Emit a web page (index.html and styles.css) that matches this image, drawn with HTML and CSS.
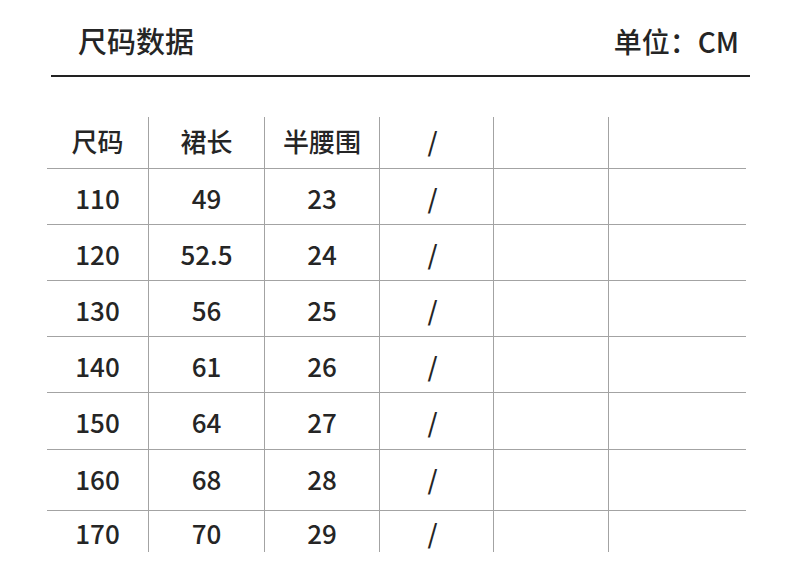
FILE: index.html
```html
<!DOCTYPE html>
<html lang="zh">
<head>
<meta charset="utf-8">
<title>尺码数据</title>
<link rel="stylesheet" href="styles.css">
</head>
<body>
<div class="page">
  <header class="head">
    <div class="title">尺码数据</div>
    <div class="unit">单位：CM</div>
  </header>
  <div class="table">
    <div class="cell th">尺码</div><div class="cell th">裙长</div><div class="cell th">半腰围</div><div class="cell th slash">/</div><div class="cell th"></div><div class="cell th last"></div>
    <div class="cell">110</div><div class="cell">49</div><div class="cell">23</div><div class="cell slash">/</div><div class="cell"></div><div class="cell last"></div>
    <div class="cell">120</div><div class="cell">52.5</div><div class="cell">24</div><div class="cell slash">/</div><div class="cell"></div><div class="cell last"></div>
    <div class="cell">130</div><div class="cell">56</div><div class="cell">25</div><div class="cell slash">/</div><div class="cell"></div><div class="cell last"></div>
    <div class="cell">140</div><div class="cell">61</div><div class="cell">26</div><div class="cell slash">/</div><div class="cell"></div><div class="cell last"></div>
    <div class="cell">150</div><div class="cell">64</div><div class="cell">27</div><div class="cell slash">/</div><div class="cell"></div><div class="cell last"></div>
    <div class="cell">160</div><div class="cell">68</div><div class="cell">28</div><div class="cell slash">/</div><div class="cell"></div><div class="cell last"></div>
    <div class="cell end">170</div><div class="cell end">70</div><div class="cell end">29</div><div class="cell slash end">/</div><div class="cell end"></div><div class="cell last end"></div>
  </div>
</div>
</body>
</html>
```
FILE: styles.css
```css
html, body {
  margin: 0;
  padding: 0;
  background: #ffffff;
}
body {
  font-family: "Noto Sans CJK SC", "Noto Sans", sans-serif;
  color: #252525;
  width: 790px;
  height: 578px;
  overflow: hidden;
}
.head {
  box-sizing: border-box;
  height: 77px;
  margin: 0 40px 0 51px;
  padding: 6px 11px 0 27px;
  display: flex;
  align-items: center;
  justify-content: space-between;
  border-bottom: 2px solid #222222;
}
.title, .unit {
  font-size: 29px;
  font-weight: 500;
  line-height: 1;
}
.unit {
  font-size: 28px;
}
.table {
  margin: 40px 0 0 47px;
  width: 699px;
  display: grid;
  grid-template-columns: 102px 116px 115px 114px 115px 137px;
  grid-template-rows: 52px 56px 56px 56px 56px 57px 61px 41px;
}
.cell {
  box-sizing: border-box;
  display: flex;
  align-items: flex-start;
  justify-content: center;
  padding-top: 16px;
  font-size: 26px;
  font-weight: 500;
  line-height: 1;
  border-right: 1px solid #a3a3a3;
  border-bottom: 1px solid #a3a3a3;
}
.cell.th {
  padding-top: 11px;
}
.cell.last {
  border-right: none;
}
.cell.end {
  border-bottom: none;
  padding-top: 9px;
}
.slash {
  padding-right: 8px;
}
```
